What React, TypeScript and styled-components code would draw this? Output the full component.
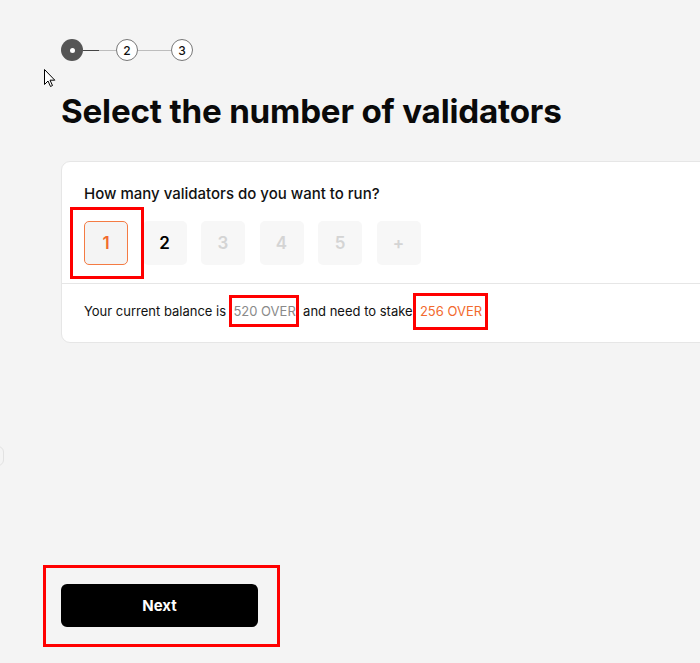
import React from "react";
import styled, { createGlobalStyle, css } from "styled-components";

const Global = createGlobalStyle`
  html, body { margin: 0; padding: 0; background: #f4f4f4; overflow: hidden; }
  body { font-family: Inter, "Noto Sans", Arial, sans-serif; color: #111; }
`;

const Page = styled.div`
  position: relative;
  width: 700px;
  height: 663px;
  padding: 39px 0 0 61px;
  box-sizing: border-box;
  overflow: hidden;
  display: flex;
  flex-direction: column;
`;

const Stepper = styled.div`
  display: flex;
  align-items: center;
  height: 22px;
`;

const StepDot = styled.div<{ $active?: boolean }>`
  width: 22px;
  height: 22px;
  border-radius: 50%;
  box-sizing: border-box;
  display: flex;
  align-items: center;
  justify-content: center;
  font-size: 12px;
  font-weight: 500;
  color: #111;
  ${(p) =>
    p.$active
      ? css`
          background: #555;
        `
      : css`
          background: #fff;
          border: 1px solid #777;
        `}
`;

const InnerDot = styled.span`
  width: 5px;
  height: 5px;
  border-radius: 50%;
  background: #fff;
`;

const StepLine = styled.div<{ $progress?: boolean }>`
  width: 33px;
  height: 1px;
  background: ${(p) =>
    p.$progress ? "linear-gradient(to right, #444 0 50%, #bdbdbd 50% 100%)" : "#bdbdbd"};
`;

const Cursor = styled.svg`
  position: absolute;
  left: 44px;
  top: 69px;
`;

const Title = styled.h1`
  margin: 29px 0 0 0;
  font-size: 33.2px;
  line-height: 42px;
  font-weight: 700;
  letter-spacing: -0.2px;
  color: #0a0a0a;
`;

const Card = styled.div`
  margin-top: 29px;
  width: 680px;
  background: #fff;
  border: 1px solid #e6e6e6;
  border-radius: 9px;
  box-sizing: border-box;
`;

const CardTop = styled.div`
  padding: 22px 22px 18px;
  border-bottom: 1px solid #e6e6e6;
`;

const Question = styled.div`
  font-size: 15px;
  line-height: 20px;
  font-weight: 500;
  color: #111;
`;

const Options = styled.div`
  display: flex;
  gap: 14.5px;
  margin-top: 17px;
`;

const Annotated = styled.div<{ $t: number; $r: number; $b: number; $l: number }>`
  position: relative;
  display: inline-flex;
  &::after {
    content: "";
    position: absolute;
    top: ${(p) => -p.$t}px;
    right: ${(p) => -p.$r}px;
    bottom: ${(p) => -p.$b}px;
    left: ${(p) => -p.$l}px;
    border: 3px solid #ff0000;
    pointer-events: none;
  }
`;

const Option = styled.div<{ $state: "selected" | "available" | "disabled" }>`
  width: 44px;
  height: 44px;
  box-sizing: border-box;
  border-radius: 5px;
  display: flex;
  align-items: center;
  justify-content: center;
  font-size: 17px;
  font-weight: 600;
  ${(p) =>
    p.$state === "selected"
      ? css`
          background: #f4f4f4;
          border: 1px solid #f47b43;
          color: #f26a2e;
        `
      : p.$state === "available"
      ? css`
          background: #f7f7f7;
          color: #000;
        `
      : css`
          background: #f7f7f7;
          color: #d4d4d4;
        `}
`;

const CardBottom = styled.div`
  height: 58px;
  padding: 0 22px 4px;
  box-sizing: border-box;
  display: flex;
  align-items: center;
  font-size: 13px;
  color: #111;
  white-space: pre;
`;

const Amount = styled.span<{ $tone: "muted" | "accent" }>`
  color: ${(p) => (p.$tone === "accent" ? "#f26a2e" : "#8a8a8a")};
`;

const Spacer = styled.div`
  flex: 1;
`;

const Footer = styled.div`
  padding-bottom: 36px;
`;

const NextButton = styled.button`
  width: 197px;
  height: 43px;
  border: none;
  border-radius: 6px;
  background: #000;
  color: #fff;
  font-family: inherit;
  font-size: 15px;
  font-weight: 700;
  cursor: pointer;
`;

const EdgeBit = styled.div`
  position: absolute;
  left: -10px;
  top: 446px;
  width: 12px;
  height: 18px;
  border: 1px solid #e2e2e2;
  border-radius: 6px;
`;

export default function App() {
  const opts: { label: string; state: "selected" | "available" | "disabled" }[] = [
    { label: "2", state: "available" },
    { label: "3", state: "disabled" },
    { label: "4", state: "disabled" },
    { label: "5", state: "disabled" },
    { label: "+", state: "disabled" },
  ];
  return (
    <>
      <Global />
      <Page>
        <Stepper>
          <StepDot $active>
            <InnerDot />
          </StepDot>
          <StepLine $progress />
          <StepDot>2</StepDot>
          <StepLine />
          <StepDot>3</StepDot>
        </Stepper>
        <Cursor width="12" height="19" viewBox="0 0 12 19">
          <path d="M0.5 0.5 L0.5 15.5 L4 12 L6.5 17.5 L8.5 16.5 L6 11.2 L10.8 11.2 Z" fill="#fff" stroke="#000" strokeWidth="1" />
        </Cursor>
        <EdgeBit />
        <Title>Select the number of validators</Title>
        <Card>
          <CardTop>
            <Question>How many validators do you want to run?</Question>
            <Options>
              <Annotated $t={14} $r={16} $b={14} $l={14}>
                <Option $state="selected">1</Option>
              </Annotated>
              {opts.map((o) => (
                <Option key={o.label} $state={o.state}>
                  {o.label}
                </Option>
              ))}
            </Options>
          </CardTop>
          <CardBottom>
            {"Your current balance is  "}
            <Annotated $t={8} $r={3} $b={8} $l={4}>
              <Amount $tone="muted">520 OVER</Amount>
            </Annotated>
            {"  and need to stake  "}
            <Annotated $t={10} $r={6} $b={11} $l={7}>
              <Amount $tone="accent">256 OVER</Amount>
            </Annotated>
          </CardBottom>
        </Card>
        <Spacer />
        <Footer>
          <Annotated $t={19} $r={22} $b={20} $l={18}>
            <NextButton>Next</NextButton>
          </Annotated>
        </Footer>
      </Page>
    </>
  );
}
